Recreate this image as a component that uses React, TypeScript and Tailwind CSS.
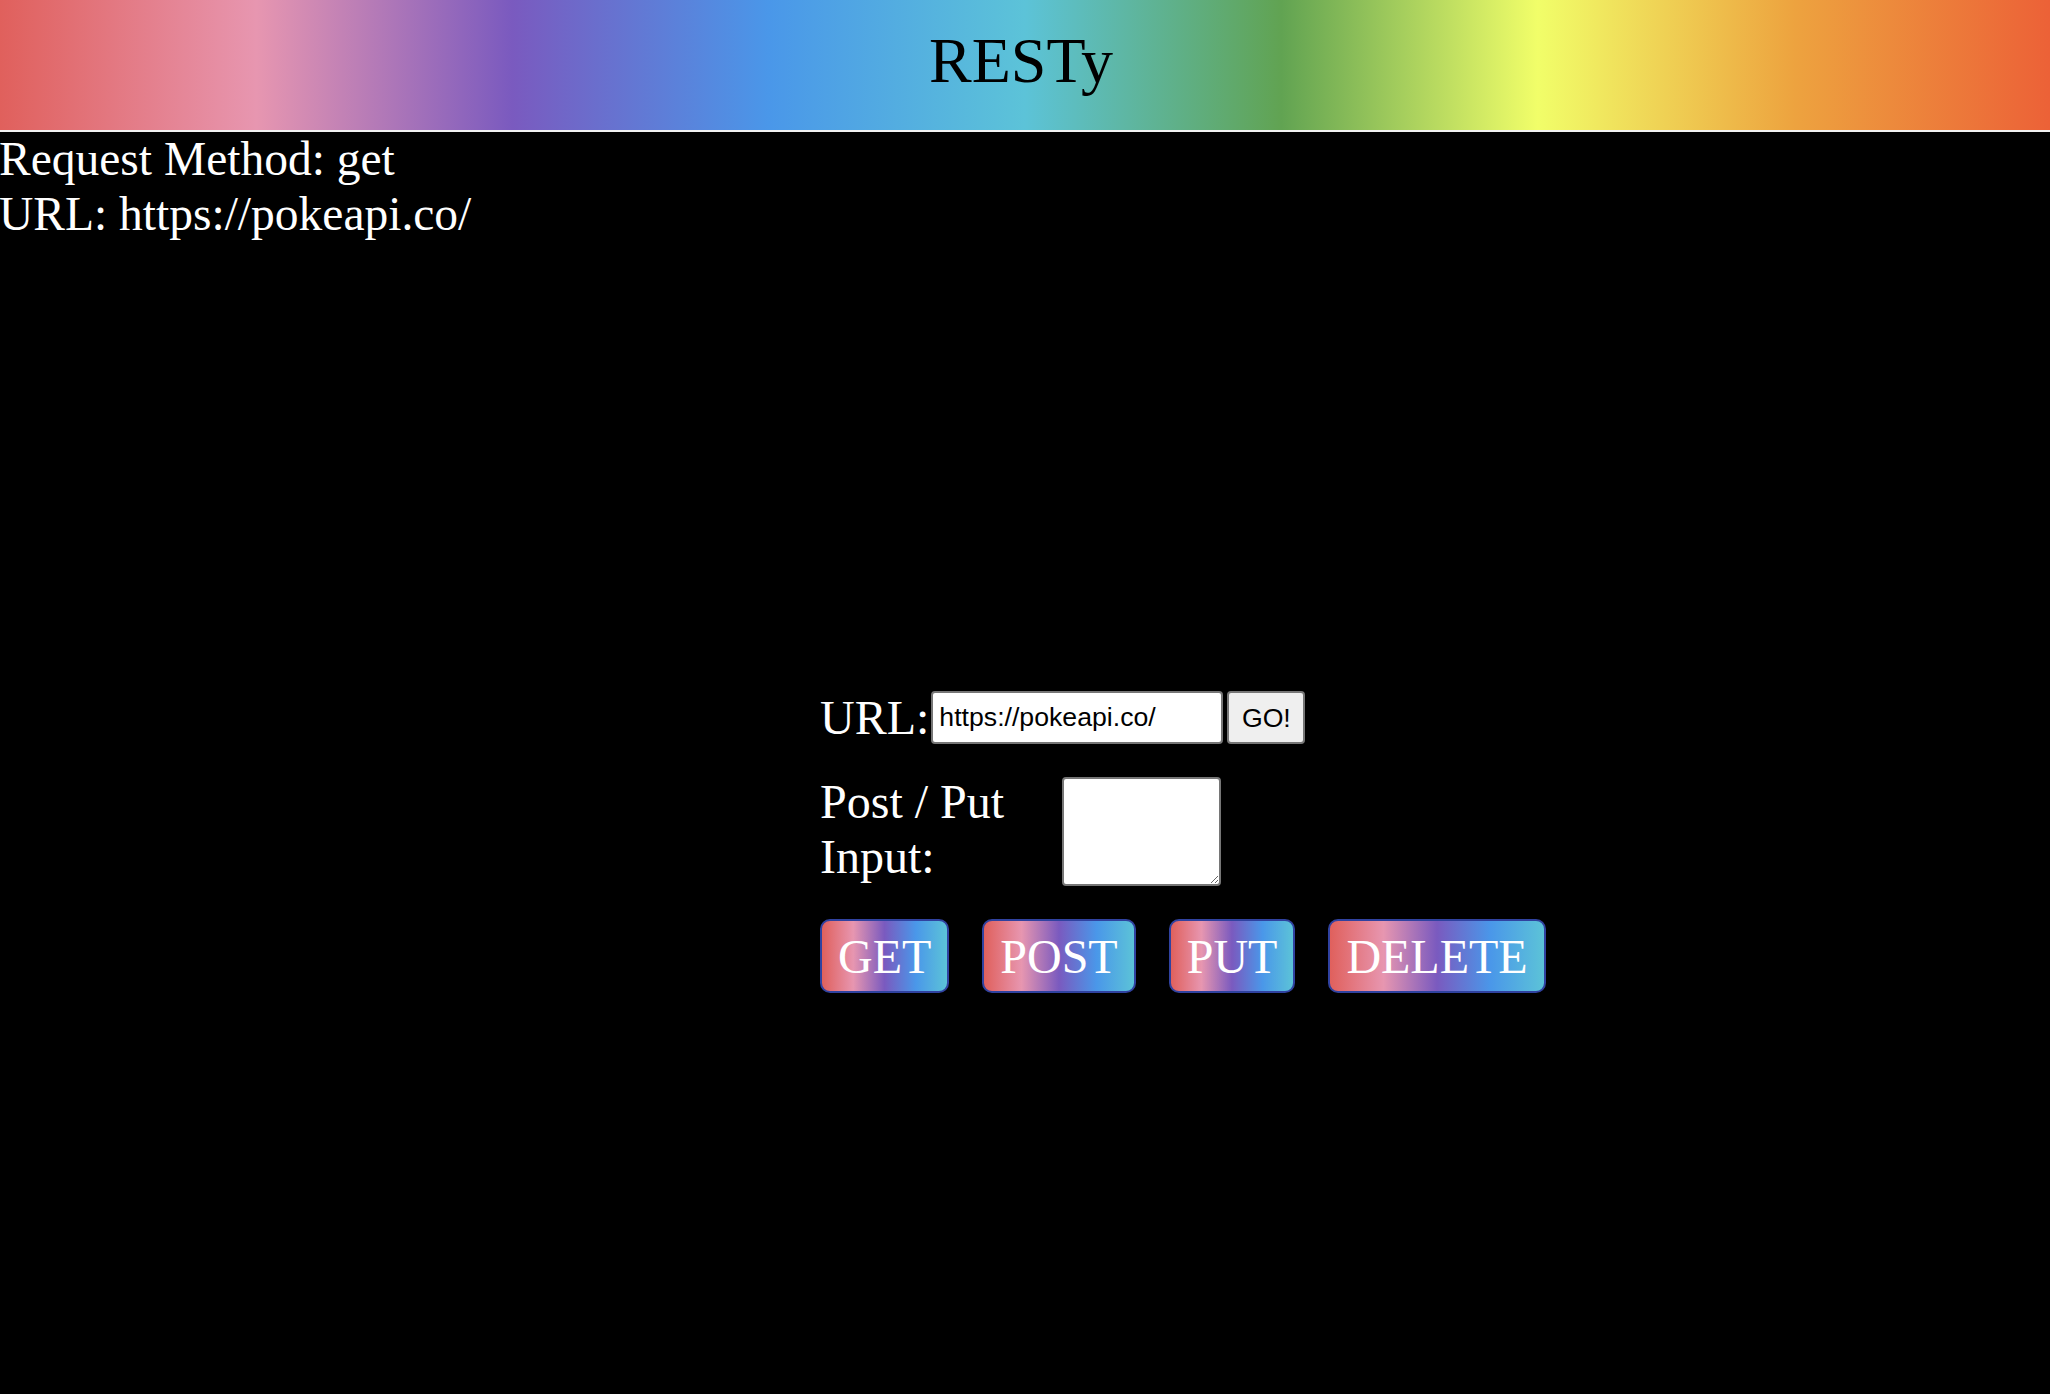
import { useState } from "react";

const methods = ["GET", "POST", "PUT", "DELETE"];

const App = () => {
  const [method, setMethod] = useState("get");
  const [url, setUrl] = useState("https://pokeapi.co/");
  const [input, setInput] = useState("https://pokeapi.co/");
  const [body, setBody] = useState("");

  return (
    <div className="min-h-screen w-full overflow-hidden bg-black text-white font-['Liberation_Serif',serif]">
      <header className="h-[132px] pt-[25px] pr-[8px] text-center text-black border-b-2 border-[#f2f2f2] bg-[linear-gradient(to_right,#e0605c,#e796b0,#7a5abf,#4a97e9,#5cc3d8,#61a352,#f1fe69,#eda33f,#ec6137)]">
        <h1 className="text-[64px] leading-[71px] font-normal">RESTy</h1>
      </header>

      {/* request summary */}
      <div className="-ml-[1px] text-[47.5px] leading-[55px]">
        <div>Request Method: {method}</div>
        <div>URL: {url}</div>
      </div>

      <Form
        input={input}
        setInput={setInput}
        body={body}
        setBody={setBody}
        onGo={() => setUrl(input)}
        onMethod={(m) => setMethod(m.toLowerCase())}
      />
    </div>
  );
};

export default App;

const Form = ({
  input,
  setInput,
  body,
  setBody,
  onGo,
  onMethod,
}: {
  input: string;
  setInput: (v: string) => void;
  body: string;
  setBody: (v: string) => void;
  onGo: () => void;
  onMethod: (m: string) => void;
}) => {
  return (
    <form
      className="mt-[448px] ml-[820px] flex flex-col text-[48px] leading-[55px]"
      onSubmit={(e) => {
        e.preventDefault();
        onGo();
      }}
    >
      <label className="flex items-center">
        <span>URL:</span>
        <input
          value={input}
          onChange={(e) => setInput(e.target.value)}
          className="ml-[2px] h-[53px] w-[292px] px-[6px] bg-white text-black border-2 border-[#767676] rounded-[4px] font-['Liberation_Sans',sans-serif] text-[26.67px] leading-normal outline-none"
        />
        <button
          type="submit"
          className="ml-[4px] h-[53px] w-[78px] bg-[#efefef] text-black border-2 border-[#767676] rounded-[4px] font-['Liberation_Sans',sans-serif] text-[26.67px] leading-normal"
        >
          GO!
        </button>
      </label>

      <label className="mt-[29px] flex items-start">
        <span className="w-[242px]">Post / Put Input:</span>
        <textarea
          value={body}
          onChange={(e) => setBody(e.target.value)}
          className="mt-[3px] h-[109px] w-[159px] bg-white text-black border-2 border-[#767676] rounded-[4px] text-[26.67px] outline-none resize"
        />
      </label>

      <div className="mt-[33px] flex gap-[33px]">
        {methods.map((m) => (
          <button
            key={m}
            type="button"
            onClick={() => onMethod(m)}
            className="h-[74px] px-[16px] flex items-center text-white text-[48px] leading-[55px] border-2 border-[#3042a0] rounded-[10px] bg-[linear-gradient(to_right,#e0605c,#e796b0,#7a5abf,#4a97e9,#5cc3d8)]"
          >
            {m}
          </button>
        ))}
      </div>
    </form>
  );
};
